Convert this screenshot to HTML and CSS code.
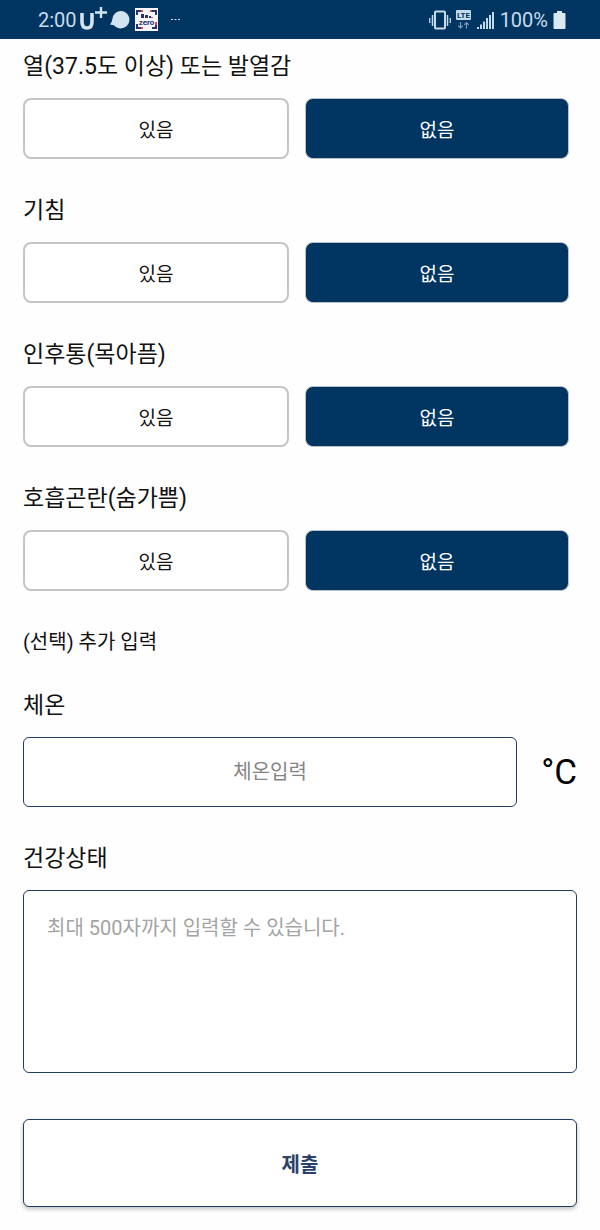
FILE: index.html
```
<!DOCTYPE html>
<html lang="ko">
<head>
    <meta charset="UTF-8">
    <meta name="viewport" content="width=device-width, initial-scale=1">
    <title>건강상태 입력</title>
    <link rel="stylesheet" href="styles.css">
</head>
<body>
    <header class="status-bar">
        <div class="status-left">
            <span class="clock">2:00</span>
            <svg class="carrier" width="27" height="24" viewBox="0 0 27 24" aria-label="U+">
                <path d="M2 7v9q0 6 5 6t5-6V7" fill="none" stroke="#d3e3ef" stroke-width="3.600"/>
                <path d="M15 6.500h12M21 1v11" fill="none" stroke="#d3e3ef" stroke-width="2.400"/>
            </svg>
            <svg class="bubble" width="20" height="18" viewBox="0 0 20 18" aria-hidden="true">
                <path d="M11 0a8.700 8.700 0 1 1-7 14.200L0 13.500Q2 11 2.400 8A8.700 8.700 0 0 1 11 0z" fill="#d3e3ef"/>
            </svg>
            <svg class="zero" width="23" height="23" viewBox="0 0 23 23" aria-hidden="true">
                <path d="M0 0h23v23H0z" fill="#f7f7fb"/>
                <g fill="none" stroke-width="2">
                    <path d="M2 7V3h4M17 3h4v4" stroke="#28346f"/>
                    <path d="M2 16v4h4M17 20h4v-4" stroke="#28346f"/>
                    <path d="M6 3h2M15 3h2M6 20h2M21 14v3" stroke="#d94e50"/>
                </g>
                <path d="M6 6h3v4H6zM10 7h3v3h-3zM14 8h2v2h-2z" fill="#28346f"/>
                <path d="M16 9h2v1h-2z" fill="#d94e50"/>
                <text x="11.500" y="17" class="zero-text">zero</text>
            </svg>
            <svg class="more" width="9" height="3" viewBox="0 0 9 3" aria-hidden="true">
                <path d="M0 1h2v1H0zM3.500 1h2v1h-2zM7 1h2v1H7z" fill="#d3e3ef"/>
            </svg>
        </div>
        <div class="status-right">
            <svg width="22" height="20" viewBox="0 0 22 20" aria-hidden="true">
                <g fill="none" stroke="#c5dbea">
                    <rect x="6" y="1.500" width="10" height="17" rx="1" stroke-width="2"/>
                    <path d="M3.500 5v11M18.500 5v11" stroke-width="1.500"/>
                    <path d="M.700 8v5M21.300 8v5" stroke-width="1.300"/>
                </g>
            </svg>
            <svg width="16" height="20" viewBox="0 0 16 20" aria-hidden="true">
                <rect x="0" y="0" width="15" height="10" rx="1" fill="#c5dbea"/>
                <text x="7.500" y="8" class="lte-text">LTE</text>
                <g fill="none" stroke="#7b9dba" stroke-width="1.200">
                    <path d="M4.500 12v6M2.200 15.700l2.300 2.300 2.300-2.300"/>
                    <path d="M10.500 18.500v-6M8.200 14.800l2.300-2.300 2.300 2.300"/>
                </g>
            </svg>
            <svg width="18" height="20" viewBox="0 0 18 20" aria-hidden="true">
                <path d="M0 17h2v2H0zM3 14.500h2V19H3zM6 11.500h2V19H6zM9 8h2v11H9zM12 5h2v14h-2zM15 2h2v17h-2z" fill="#c5dbea"/>
            </svg>
            <span class="percent">100%</span>
            <svg width="13" height="20" viewBox="0 0 13 20" aria-hidden="true">
                <path d="M4 1h5v2h2.500q1 0 1 1v14q0 1-1 1h-10q-1 0-1-1V4q0-1 1-1H4z" fill="#dbe9f3"/>
            </svg>
        </div>
    </header>

    <form class="container">
        <!-- 증상 선택 -->
        <div class="question" role="group" aria-labelledby="fever">
            <h2 class="title" id="fever">열(37.5도 이상) 또는 발열감</h2>
            <div class="choices">
                <button type="button" class="choice" aria-pressed="false">있음</button>
                <button type="button" class="choice selected" aria-pressed="true">없음</button>
            </div>
        </div>
        <div class="question" role="group" aria-labelledby="cough">
            <h2 class="title" id="cough">기침</h2>
            <div class="choices">
                <button type="button" class="choice" aria-pressed="false">있음</button>
                <button type="button" class="choice selected" aria-pressed="true">없음</button>
            </div>
        </div>
        <div class="question" role="group" aria-labelledby="throat">
            <h2 class="title" id="throat">인후통(목아픔)</h2>
            <div class="choices">
                <button type="button" class="choice" aria-pressed="false">있음</button>
                <button type="button" class="choice selected" aria-pressed="true">없음</button>
            </div>
        </div>
        <div class="question" role="group" aria-labelledby="breath">
            <h2 class="title" id="breath">호흡곤란(숨가쁨)</h2>
            <div class="choices">
                <button type="button" class="choice" aria-pressed="false">있음</button>
                <button type="button" class="choice selected" aria-pressed="true">없음</button>
            </div>
        </div>

        <!-- 추가 입력 -->
        <p class="optional">(선택) 추가 입력</p>
        <label class="title" for="temperature">체온</label>
        <div class="temperature-row">
            <input type="text" inputmode="decimal" id="temperature" class="temperature" placeholder="체온입력">
            <span class="unit">°C</span>
        </div>
        <label class="title" for="health">건강상태</label>
        <textarea id="health" class="health" maxlength="500" placeholder="최대 500자까지 입력할 수 있습니다."></textarea>

        <button type="submit" class="submit">제출</button>
    </form>
</body>
</html>
```
FILE: styles.css
```
* {
    box-sizing: border-box;
}

body {
    margin: 0;
    background-color: #fefefe;
    color: #111;
    font-family: Roboto, "Noto Sans CJK KR", sans-serif;
}

button, input, textarea {
    font-family: inherit;
}

/* 상태 표시줄 */
.status-bar {
    display: flex;
    justify-content: space-between;
    align-items: center;
    height: 39px;
    padding: 0 34px 0 38px;
    background-color: #003562;
    color: #c9dcea;
    font-size: 20px;
}

.status-left, .status-right {
    display: flex;
    align-items: center;
}

.status-left {
    gap: 3px;
}

.status-right {
    gap: 5px;
}

.carrier {
    margin-bottom: 4px;
}

.zero {
    margin-left: 2px;
}

.more {
    margin-left: 10px;
}

.zero-text {
    font-size: 8px;
    font-weight: bold;
    text-anchor: middle;
    fill: #28346f;
}

.lte-text {
    font-size: 8px;
    font-weight: bold;
    text-anchor: middle;
    fill: #003562;
}

.container {
    display: flex;
    flex-direction: column;
    padding: 12px 23px 23px;
}

.question {
    margin-bottom: 36px;
}

.title {
    display: block;
    margin: 0 0 15px;
    font-size: 23px;
    font-weight: normal;
    line-height: 32px;
}

.choices {
    display: flex;
    gap: 16px;
    padding-right: 8px;
}

.choice {
    flex: 1;
    height: 61px;
    padding: 0;
    border: 2px solid #c4c4c4;
    border-radius: 8px;
    background-color: #fff;
    color: #111;
    font-size: 19px;
    cursor: pointer;
}

.choice.selected {
    border: 1px solid #b9c0c7;
    background-color: #003562;
    color: #fff;
}

.optional {
    margin: 0 0 33px;
    font-size: 20px;
    line-height: 30px;
}

.temperature-row {
    display: flex;
    align-items: center;
    gap: 24px;
    margin-bottom: 36px;
}

.temperature, .health {
    border: 1px solid #253d5e;
    border-radius: 6px;
    background-color: #fff;
    color: #111;
    font-size: 20px;
}

.temperature {
    flex: 1;
    min-width: 0;
    height: 70px;
    text-align: center;
}

.temperature::placeholder {
    color: #858585;
}

.unit {
    color: #000;
    font-size: 35px;
}

.health {
    height: 183px;
    margin-bottom: 46px;
    padding: 22px 23px;
    line-height: 30px;
    resize: none;
}

.health::placeholder {
    color: #a3a3a3;
}

.submit {
    height: 88px;
    border: 1px solid #253d5e;
    border-radius: 6px;
    background-color: #fff;
    box-shadow: 0 2px 4px rgba(0, 0, 0, 0.25);
    color: #2b416c;
    font-size: 20px;
    font-weight: bold;
    cursor: pointer;
}
```
